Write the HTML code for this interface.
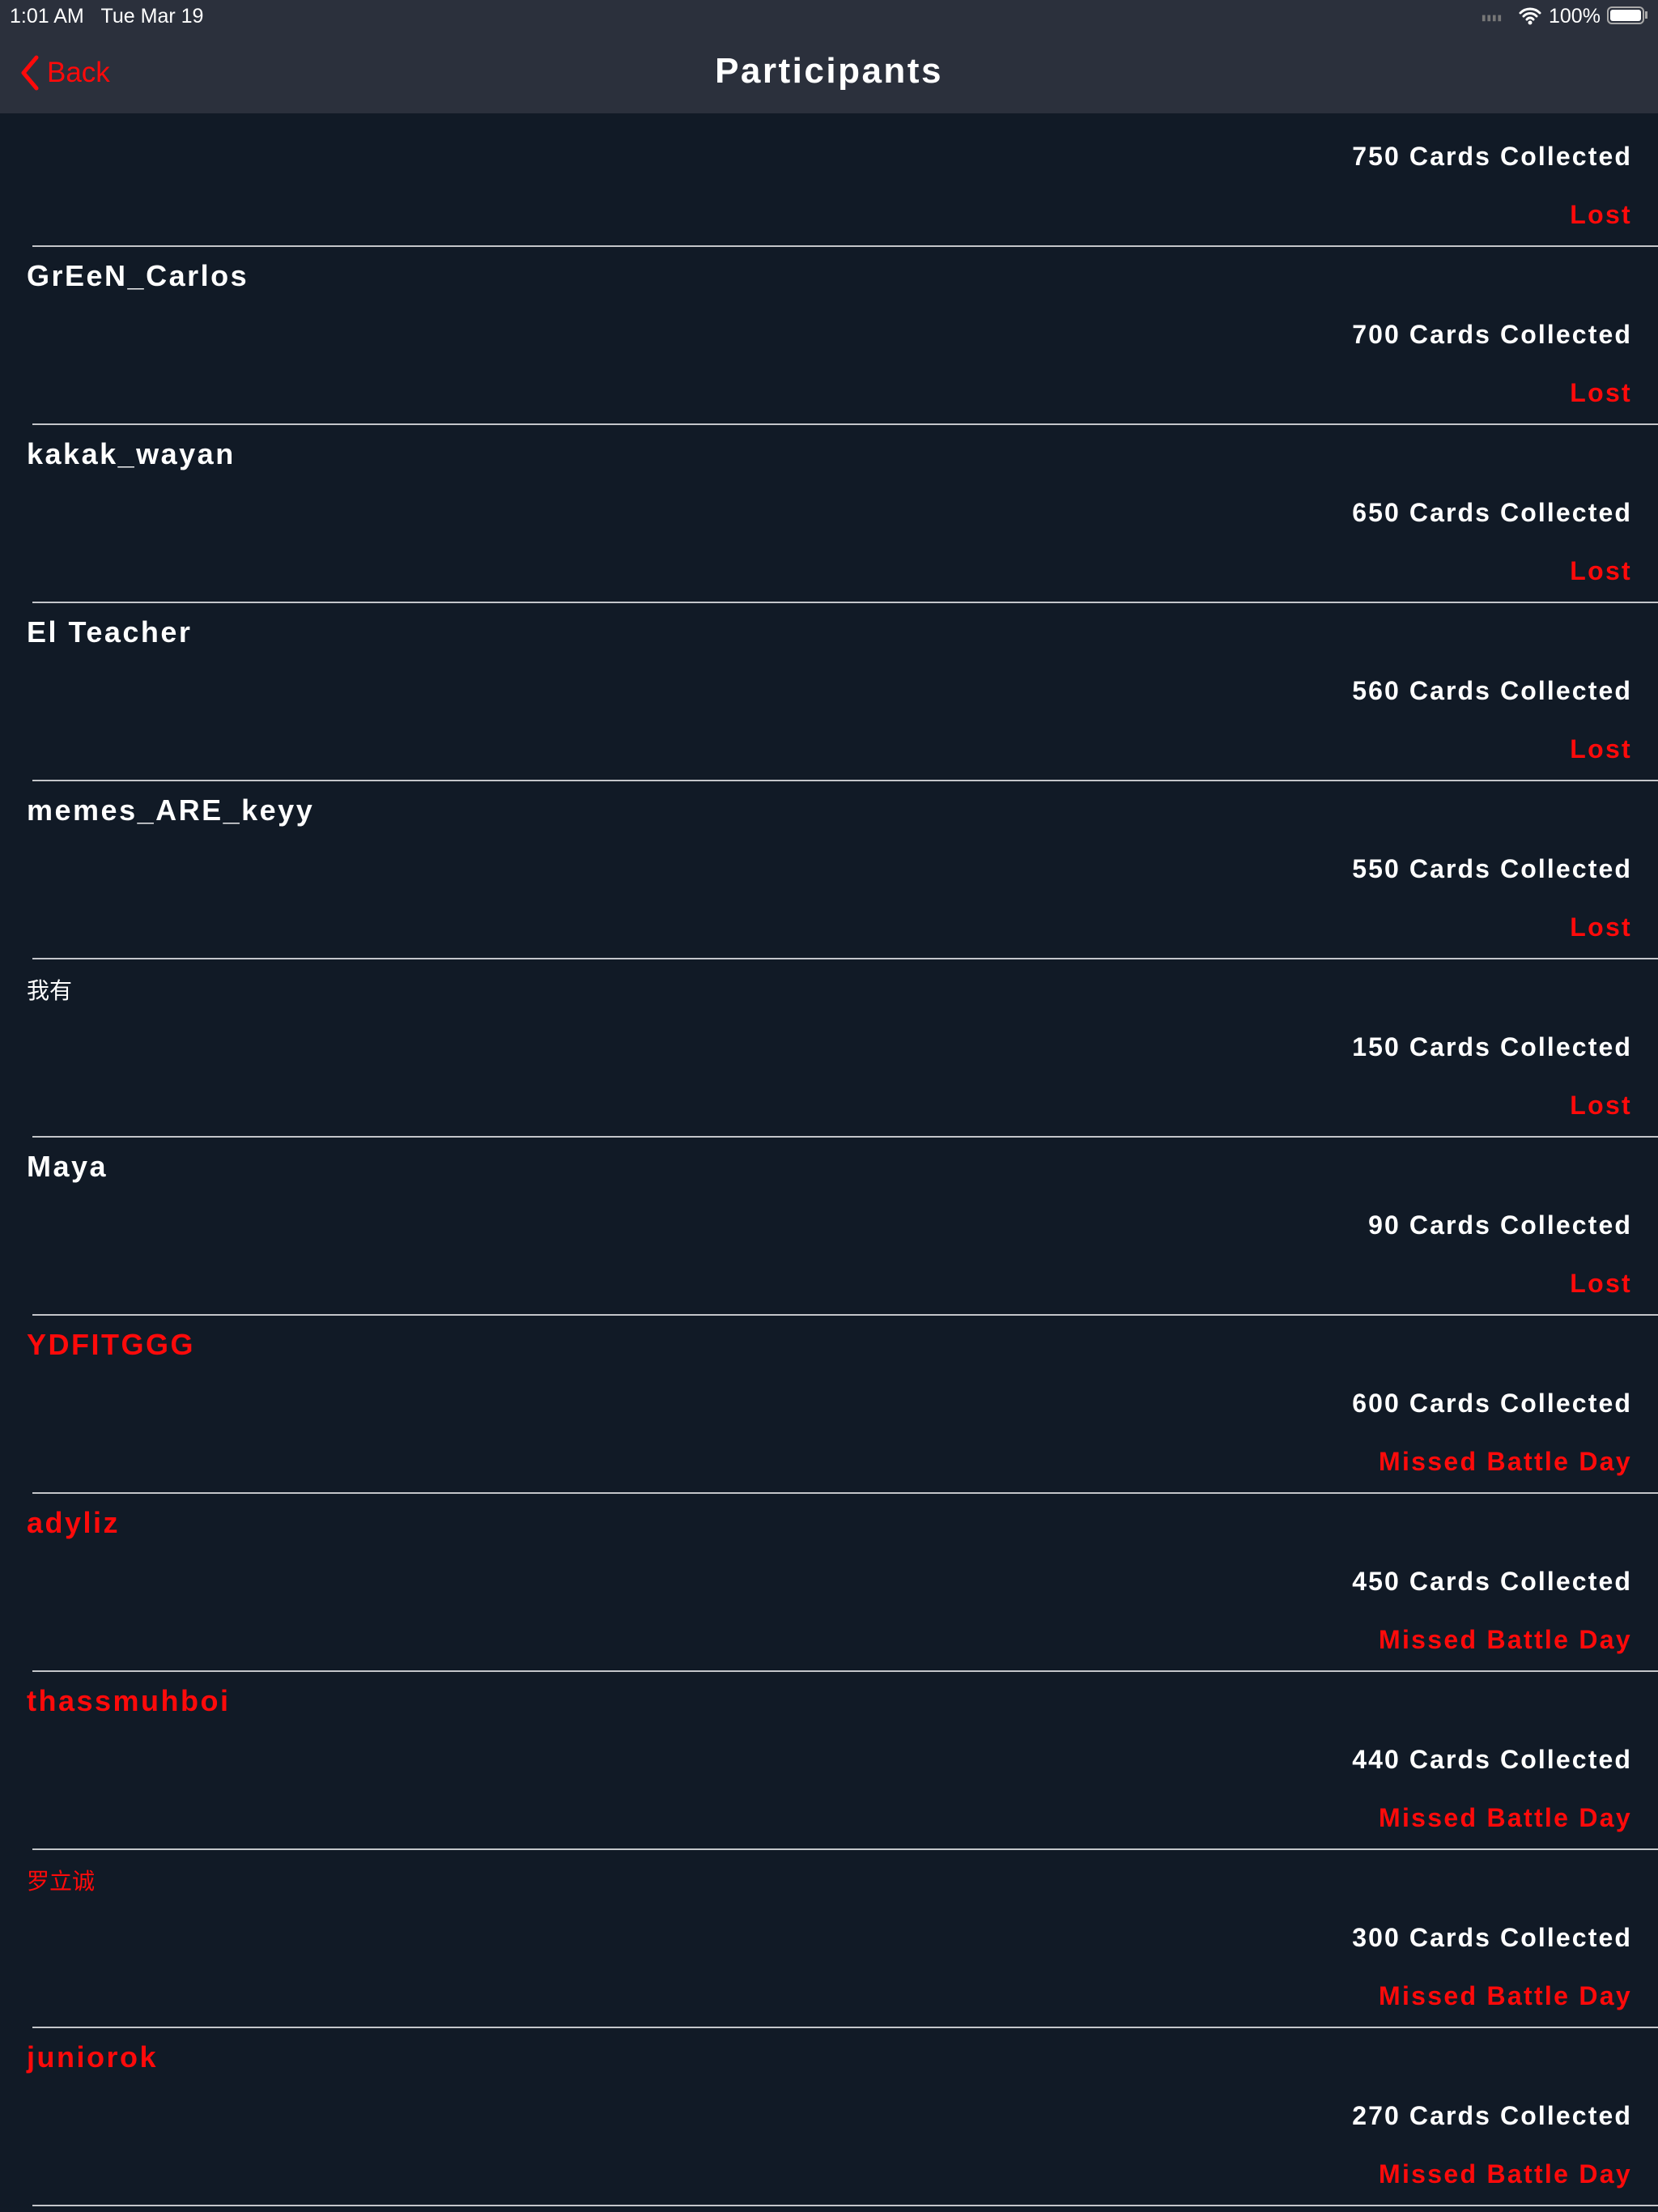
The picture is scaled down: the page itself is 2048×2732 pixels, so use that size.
<!DOCTYPE html>
<html><head><meta charset="utf-8"><style>
html,body{margin:0;padding:0}
body{width:2048px;height:2732px;background:#111a26;position:relative;overflow:hidden;font-family:"Liberation Sans","Noto Sans CJK SC",sans-serif;color:#fff}
.nav{position:absolute;left:0;top:0;width:2048px;height:140px;background:#2b303c}
.t{position:absolute;white-space:nowrap;line-height:1}
.sep{position:absolute;left:40px;right:0;height:2px;background:#c4c6ca}
.name{left:33px;font-weight:bold;font-size:36px;transform:translateY(-50%);letter-spacing:2.5px}
.cn{left:33px;font-size:28px;transform:translateY(-50%)}
.cards{right:32px;font-weight:bold;font-size:32px;transform:translateY(-50%);letter-spacing:2.1px}
.st{right:32px;font-weight:bold;font-size:32px;color:#ff0a0a;transform:translateY(-50%);letter-spacing:2.3px}
.red{color:#ff0a0a}
</style></head><body>
<div class="nav"></div>
<div class="t" style="left:12px;top:8px;font-size:25px;">1:01 AM&nbsp;&nbsp;&nbsp;Tue Mar 19</div>
<div class="t" style="left:1830px;top:18px;font-size:10px;color:#777;letter-spacing:1px">▮▮▮▮</div>
<svg style="position:absolute;left:1875px;top:7px" width="30" height="24" viewBox="0 0 30 24"><path d="M3 9 A17 17 0 0 1 27 9 M7 13 A11 11 0 0 1 23 13 M11 17 A5 5 0 0 1 19 17" stroke="#fff" stroke-width="3" fill="none" stroke-linecap="round"/><circle cx="15" cy="21" r="2.5" fill="#fff"/></svg>
<div class="t" style="left:1913px;top:8px;font-size:25px;">100%</div>
<div style="position:absolute;left:1985px;top:8px;width:46px;height:22px;border:2px solid #aaa;border-radius:6px;box-sizing:border-box"><div style="position:absolute;left:2px;top:2px;right:2px;bottom:2px;background:#fff;border-radius:3px"></div></div>
<div style="position:absolute;left:2032px;top:14px;width:3px;height:9px;background:#aaa"></div>
<svg style="position:absolute;left:24px;top:68px" width="26" height="44" viewBox="0 0 26 44"><path d="M21 3 L5 22 L21 41" stroke="#ff0a0a" stroke-width="5" fill="none" stroke-linecap="round" stroke-linejoin="round"/></svg>
<div class="t" style="left:58px;top:72px;font-size:35px;color:#ff0a0a">Back</div>
<div class="t" style="left:0;width:2048px;text-align:center;top:66px;font-size:44px;font-weight:bold;letter-spacing:2.5px">Participants</div>

<div class="t cards" style="top:193px">750 Cards Collected</div>
<div class="t st" style="top:265px">Lost</div>

<div class="sep" style="top:303px"></div>
<div class="t name" style="top:341px">GrEeN_Carlos</div>
<div class="t cards" style="top:413px">700 Cards Collected</div>
<div class="t st" style="top:485px">Lost</div>

<div class="sep" style="top:523px"></div>
<div class="t name" style="top:561px">kakak_wayan</div>
<div class="t cards" style="top:633px">650 Cards Collected</div>
<div class="t st" style="top:705px">Lost</div>

<div class="sep" style="top:743px"></div>
<div class="t name" style="top:781px">El Teacher</div>
<div class="t cards" style="top:853px">560 Cards Collected</div>
<div class="t st" style="top:925px">Lost</div>

<div class="sep" style="top:963px"></div>
<div class="t name" style="top:1001px">memes_ARE_keyy</div>
<div class="t cards" style="top:1073px">550 Cards Collected</div>
<div class="t st" style="top:1145px">Lost</div>

<div class="sep" style="top:1183px"></div>
<div class="t cn" style="top:1224px">我有</div>
<div class="t cards" style="top:1293px">150 Cards Collected</div>
<div class="t st" style="top:1365px">Lost</div>

<div class="sep" style="top:1403px"></div>
<div class="t name" style="top:1441px">Maya</div>
<div class="t cards" style="top:1513px">90 Cards Collected</div>
<div class="t st" style="top:1585px">Lost</div>

<div class="sep" style="top:1623px"></div>
<div class="t name red" style="top:1661px">YDFITGGG</div>
<div class="t cards" style="top:1733px">600 Cards Collected</div>
<div class="t st" style="top:1805px">Missed Battle Day</div>

<div class="sep" style="top:1843px"></div>
<div class="t name red" style="top:1881px">adyliz</div>
<div class="t cards" style="top:1953px">450 Cards Collected</div>
<div class="t st" style="top:2025px">Missed Battle Day</div>

<div class="sep" style="top:2063px"></div>
<div class="t name red" style="top:2101px">thassmuhboi</div>
<div class="t cards" style="top:2173px">440 Cards Collected</div>
<div class="t st" style="top:2245px">Missed Battle Day</div>

<div class="sep" style="top:2283px"></div>
<div class="t cn red" style="top:2324px">罗立诚</div>
<div class="t cards" style="top:2393px">300 Cards Collected</div>
<div class="t st" style="top:2465px">Missed Battle Day</div>

<div class="sep" style="top:2503px"></div>
<div class="t name red" style="top:2541px">juniorok</div>
<div class="t cards" style="top:2613px">270 Cards Collected</div>
<div class="t st" style="top:2685px">Missed Battle Day</div>

<div class="sep" style="top:2723px"></div>
</body></html>
